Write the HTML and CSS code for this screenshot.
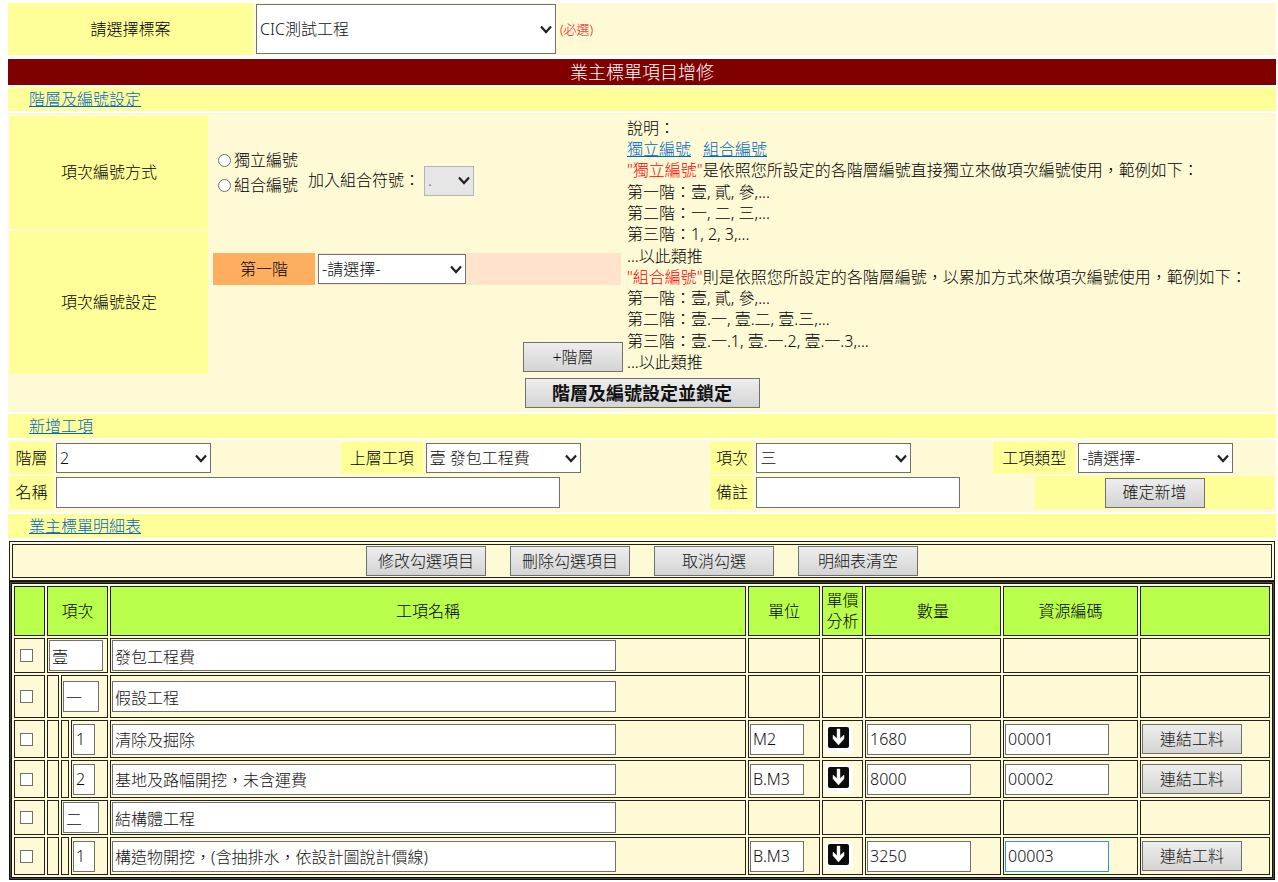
FILE: index.html
```html
<!DOCTYPE html>
<html lang="zh-Hant">
<head>
<meta charset="utf-8">
<meta name="viewport" content="width=device-width, initial-scale=1">
<title>業主標單項目增修</title>
<link rel="stylesheet" href="styles.css">
</head>
<body>
<svg class="sprite" aria-hidden="true">
  <symbol id="down" viewBox="0 0 28 28">
    <rect width="28" height="28" fill="#fff"/>
    <rect x="3" y="2" width="21" height="21" rx="2" fill="#0b0b0b"/>
    <path d="M12 4h3v9.500l4-3.500v3.800l-5.500 6.200-5.500-6.200V10l4 3.500z" fill="#fff" stroke="#fff" stroke-width=".4"/>
  </symbol>
</svg>
<main class="page">
  <div class="project">
    <label class="project-label" for="project">請選擇標案</label>
    <div class="project-field">
      <select id="project" class="field project-select"><option>CIC測試工程</option></select>
      <span class="required">(必選)</span>
    </div>
  </div>
  <h1 class="title">業主標單項目增修</h1>

  <h2 class="bar"><a href="#levels">階層及編號設定</a></h2>
  <section class="panel settings" id="levels">
    <div class="tag mode-tag">項次編號方式</div>
    <div class="mode">
      <div class="radios">
        <label><input type="radio" name="mode">獨立編號</label>
        <label><input type="radio" name="mode">組合編號</label>
      </div>
      <label class="symbol-label" for="symbol">加入組合符號：</label>
      <select id="symbol" class="field symbol-select" disabled><option>.</option></select>
    </div>
    <div class="tag level-tag">項次編號設定</div>
    <div class="levels">
      <div class="level-row">
        <label class="level-name" for="level1">第一階</label>
        <div class="level-field"><select id="level1" class="field level-select"><option>-請選擇-</option></select></div>
      </div>
      <button type="button" class="btn add-level">+階層</button>
    </div>
    <div class="help">
      <div>說明：<br><a href="#single">獨立編號</a><a class="second" href="#combined">組合編號</a><br><span class="red">"獨立編號"</span>是依照您所設定的各階層編號直接獨立來做項次編號使用，範例如下：</div>
      <div>第一階：壹, 貳, 參,...<br>第二階：一, 二, 三,...<br>第三階：1, 2, 3,...</div>
      <div>...以此類推<br><span class="red">"組合編號"</span>則是依照您所設定的各階層編號，以累加方式來做項次編號使用，範例如下：<br>第一階：壹, 貳, 參,...<br>第二階：壹.一, 壹.二, 壹.三,...</div>
      <div>第三階：壹.一.1, 壹.一.2, 壹.一.3,...<br>...以此類推</div>
    </div>
    <div class="lock"><button type="button" class="btn lock-btn">階層及編號設定並鎖定</button></div>
  </section>

  <h2 class="bar"><a href="#add">新增工項</a></h2>
  <section class="panel add" id="add">
    <div class="add-row first">
      <label class="tag" for="a-level">階層</label>
      <div class="cell"><select id="a-level" class="field pick"><option>2</option></select></div>
      <label class="tag" for="a-parent">上層工項</label>
      <div class="cell"><select id="a-parent" class="field pick"><option>壹 發包工程費</option></select></div>
      <label class="tag" for="a-order">項次</label>
      <div class="cell"><select id="a-order" class="field pick"><option>三</option></select></div>
      <label class="tag" for="a-type">工項類型</label>
      <div class="cell"><select id="a-type" class="field pick"><option>-請選擇-</option></select></div>
    </div>
    <div class="add-row second-row">
      <label class="tag" for="a-name">名稱</label>
      <div class="cell"><input id="a-name" class="field wide" type="text"></div>
      <label class="tag" for="a-note">備註</label>
      <div class="cell"><input id="a-note" class="field note" type="text"></div>
      <div class="tag"><button type="button" class="btn">確定新增</button></div>
    </div>
  </section>

  <h2 class="bar"><a href="#detail">業主標單明細表</a></h2>
  <section class="detail" id="detail">
    <div class="toolbar">
      <div class="toolbar-inner">
        <button type="button" class="btn tool">修改勾選項目</button>
        <button type="button" class="btn tool">刪除勾選項目</button>
        <button type="button" class="btn tool">取消勾選</button>
        <button type="button" class="btn tool">明細表清空</button>
      </div>
    </div>
    <table class="items">
      <colgroup>
        <col class="c-check"><col class="c-l1"><col class="c-l2"><col class="c-l3"><col><col class="c-unit"><col class="c-link"><col class="c-qty"><col class="c-code"><col class="c-act">
      </colgroup>
      <thead>
        <tr><th></th><th colspan="3">項次</th><th>工項名稱</th><th>單位</th><th>單價<br>分析</th><th>數量</th><th>資源編碼</th><th></th></tr>
      </thead>
      <tbody>
        <tr class="short">
          <td><input type="checkbox" aria-label="選取 發包工程費"></td>
          <td colspan="3"><input class="field n1" aria-label="項次" value="壹"></td>
          <td><input class="field wide" aria-label="工項名稱" value="發包工程費"></td>
          <td></td><td></td><td></td><td></td><td></td>
        </tr>
        <tr class="tall">
          <td><input type="checkbox" aria-label="選取 假設工程"></td>
          <td></td>
          <td colspan="2"><input class="field n2" aria-label="項次" value="一"></td>
          <td><input class="field wide" aria-label="工項名稱" value="假設工程"></td>
          <td></td><td></td><td></td><td></td><td></td>
        </tr>
        <tr>
          <td><input type="checkbox" aria-label="選取 清除及掘除"></td>
          <td></td><td></td>
          <td><input class="field n3" aria-label="項次" value="1"></td>
          <td><input class="field wide" aria-label="工項名稱" value="清除及掘除"></td>
          <td><input class="field unit" aria-label="單位" value="M2"></td>
          <td><button type="button" class="icon-btn" aria-label="單價分析"><svg class="icon"><use href="#down"/></svg></button></td>
          <td><input class="field num" aria-label="數量" value="1680"></td>
          <td><input class="field num" aria-label="資源編碼" value="00001"></td>
          <td><button type="button" class="btn">連結工料</button></td>
        </tr>
        <tr>
          <td><input type="checkbox" aria-label="選取 基地及路幅開挖"></td>
          <td></td><td></td>
          <td><input class="field n3" aria-label="項次" value="2"></td>
          <td><input class="field wide" aria-label="工項名稱" value="基地及路幅開挖，未含運費"></td>
          <td><input class="field unit" aria-label="單位" value="B.M3"></td>
          <td><button type="button" class="icon-btn" aria-label="單價分析"><svg class="icon"><use href="#down"/></svg></button></td>
          <td><input class="field num" aria-label="數量" value="8000"></td>
          <td><input class="field num" aria-label="資源編碼" value="00002"></td>
          <td><button type="button" class="btn">連結工料</button></td>
        </tr>
        <tr class="short">
          <td><input type="checkbox" aria-label="選取 結構體工程"></td>
          <td></td>
          <td colspan="2"><input class="field n2" aria-label="項次" value="二"></td>
          <td><input class="field wide" aria-label="工項名稱" value="結構體工程"></td>
          <td></td><td></td><td></td><td></td><td></td>
        </tr>
        <tr>
          <td><input type="checkbox" aria-label="選取 構造物開挖"></td>
          <td></td><td></td>
          <td><input class="field n3" aria-label="項次" value="1"></td>
          <td><input class="field wide" aria-label="工項名稱" value="構造物開挖，(含抽排水，依設計圖說計價線)"></td>
          <td><input class="field unit" aria-label="單位" value="B.M3"></td>
          <td><button type="button" class="icon-btn" aria-label="單價分析"><svg class="icon"><use href="#down"/></svg></button></td>
          <td><input class="field num" aria-label="數量" value="3250"></td>
          <td><input class="field num active" aria-label="資源編碼" value="00003"></td>
          <td><button type="button" class="btn">連結工料</button></td>
        </tr>
      </tbody>
    </table>
  </section>
</main>
</body>
</html>
```

FILE: styles.css
```css
* { box-sizing: border-box; }

body {
  margin: 0;
  background: #fff;
  color: #000;
  font: 300 16px/21px "Noto Sans", "Noto Sans CJK TC", sans-serif;
}

.sprite { position: absolute; width: 0; height: 0; }

.page {
  display: flex;
  flex-direction: column;
  gap: 2px;
  padding: 3px 2px 2px 8px;
}

a { color: #0066cc; }

.panel, .detail { background: #fffad6; }

.tag {
  display: flex;
  align-items: center;
  justify-content: center;
  background: #ffff99;
}

/* form controls */
.field {
  height: 31px;
  margin: 0;
  border: 1px solid #707070;
  border-radius: 0;
  background: #fff;
  color: #111;
  font: inherit;
  padding: 0 2px;
}

select.field {
  appearance: none;
  height: 30px;
  padding: 0 16px 0 3px;
  background: #fff url("data:image/svg+xml,%3Csvg xmlns='http://www.w3.org/2000/svg' width='12' height='9'%3E%3Cpath d='M1 1.500l5 5.500 5-5.500' fill='none' stroke='%23222' stroke-width='2.200'/%3E%3C/svg%3E") no-repeat right 3px center;
}
select.field:disabled { border-color: #b4b4b4; background-color: #e6e6e6; color: #666; opacity: 1; }
.field.active { border-color: #2a9ad6; }

.btn {
  min-width: 100px;
  height: 30px;
  padding: 0 8px;
  border: 1px solid #707070;
  background: linear-gradient(#eee, #d4d4d4);
  color: #111;
  font: inherit;
}

input[type="checkbox"], input[type="radio"] {
  appearance: none;
  width: 13px;
  height: 13px;
  margin: 0;
  border: 1px solid #707070;
  background: #fff;
}
input[type="radio"] { border-radius: 50%; }
input[type="checkbox"]:checked, input[type="radio"]:checked { background: #444; }

/* project picker */
.project {
  display: flex;
  min-height: 52px;
  margin-bottom: 2px;
  background: #fffad6;
}
.project-label {
  display: flex;
  align-items: center;
  justify-content: center;
  width: 245px;
  background: #ffff99;
}
.project-field { display: flex; align-items: center; gap: 4px; padding: 0 3px; }
.project-select.field { width: 300px; height: 50px; }
.required { color: #f00; font-size: 13px; }

.title {
  margin: 0;
  background: #800000;
  color: #fff;
  font-size: 18px;
  font-weight: 300;
  line-height: 26px;
  text-align: center;
}

.bar {
  margin: 0;
  padding: 1px 0 0 21px;
  background: #ffff99;
  font-size: 16px;
  font-weight: 300;
  line-height: 23px;
}

/* numbering settings */
.settings {
  display: grid;
  grid-template-columns: 198px 413px 1fr;
  grid-template-rows: 113px auto auto;
  gap: 2px 3px;
  padding: 3px 2px 4px;
}
.mode-tag { grid-area: 1 / 1; }
.level-tag { grid-area: 2 / 1; }
.mode {
  grid-area: 1 / 2;
  display: flex;
  align-items: center;
  padding-left: 7px;
}
.radios { display: flex; flex-direction: column; gap: 4px; margin-right: 10px; }
.radios label { display: flex; align-items: center; gap: 3px; }
.mode .symbol-label, .symbol-select { margin-top: 16px; }
.symbol-label { margin-right: 4px; }
.symbol-select { width: 50px; }
.levels {
  grid-area: 2 / 2;
  display: flex;
  flex-direction: column;
  justify-content: space-between;
  padding: 22px 1px 2px 2px;
}
.level-row { display: flex; height: 32px; margin-right: 2px; }
.level-name {
  display: flex;
  align-items: center;
  justify-content: center;
  width: 102px;
  background: #ffae60;
}
.level-field { display: flex; flex: 1; align-items: center; padding-left: 3px; background: linear-gradient(to right, #fffad6 3px, #ffe3ca 3px); }
.level-select { width: 148px; }
.add-level { align-self: flex-end; }
.help { grid-area: 1 / 3 / 3 / 4; display: flex; flex-direction: column; gap: 1px; padding: 2px 0 1px; }
.help .second { margin-left: 12px; }
.red { color: #f00; }
.lock { grid-area: 3 / 1 / 4 / 4; padding-top: 2px; text-align: center; }
.lock-btn { width: 235px; font-size: 18px; font-weight: 700; vertical-align: top; }

/* new item form */
.add { padding: 2px 2px 3px; }
.add-row { display: grid; }
.first {
  grid-template-columns: 43px 288fr 82px 288fr 43px 240fr 82px 199fr;
  height: 32px;
  margin-bottom: 2px;
}
.second-row {
  grid-template-columns: 43px 658fr 43px 282fr 239fr;
  height: 33px;
}
.cell { display: flex; align-items: center; padding-left: 3px; }
.pick { width: 155px; }
.wide { width: 504px; }
.note { width: 204px; }

/* detail list */
.detail { margin: 1px 1px 0; }
.toolbar { padding: 2px; border: 1px solid #222; }
.toolbar-inner {
  display: flex;
  justify-content: center;
  gap: 24px;
  height: 34px;
  padding-top: 1px;
  border: 1px solid #222;
}
.tool { width: 120px; }

.items {
  width: calc(100% - 4px);
  margin: 2px;
  table-layout: fixed;
  border: 1px solid #111;
  border-collapse: separate;
  border-spacing: 2px;
  box-shadow: 0 0 0 1px #484844, 0 0 0 2px #111;
}
.items th, .items td { padding: 0 1px; border: 1px solid #222; vertical-align: middle; }
.items th { height: 50px; background: #b9ff4c; font-weight: 300; }
.items td { height: 38px; text-align: left; }
.items .short td { height: 35px; }
.items .tall td { height: 43px; }
.items td > * { display: block; }
.items input[type="checkbox"] { margin-left: 4px; }
.c-check { width: 31px; }
.c-l1 { width: 12px; }
.c-l2 { width: 8px; }
.c-l3 { width: 37px; }
.c-unit { width: 72px; }
.c-link { width: 41px; }
.c-qty { width: 136px; }
.c-code { width: 135px; }
.c-act { width: 130px; }
.n1 { width: 54px; }
.n2 { width: 36px; }
.n3 { width: 22px; }
.unit { width: 54px; }
.num { width: 104px; }
.icon-btn { margin: 0; padding: 0; border: 0; background: none; }
.icon { display: block; width: 28px; height: 28px; margin-left: 1px; }
```
